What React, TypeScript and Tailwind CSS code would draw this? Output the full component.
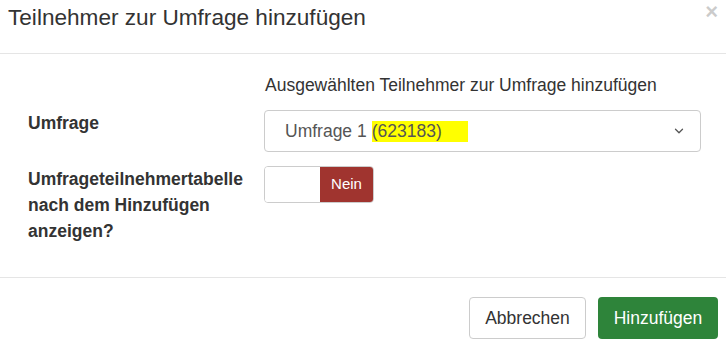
import { ChevronDown } from 'lucide-react';

function Header() {
  return (
    <div className="flex items-start justify-between h-[54px] border-b border-[#e5e5e5] pl-[8px] pr-[8px]">
      <h4 className="text-[22.6px] leading-[30px] mt-[3px] text-[#333]">Teilnehmer zur Umfrage hinzufügen</h4>
      <button className="text-[22px] leading-[21px] font-bold text-black opacity-20 mt-[1px]">×</button>
    </div>
  );
}

function SurveySelect() {
  return (
    <div className="flex items-center justify-between h-[42px] border border-[#ccc] rounded-[4px] pl-[20px] pr-[14px] text-[17.5px] text-[#555]">
      <div className="flex items-center">
        <span>Umfrage 1</span>
        <span className="ml-[5px] bg-[#ffff00] pr-[26px] leading-[21px]">(623183)</span>
      </div>
      <ChevronDown className="w-[14px] h-[14px] text-[#555]" strokeWidth={2.2} />
    </div>
  );
}

function Toggle() {
  return (
    <div className="flex w-[110px] h-[37px] border border-[#ccc] rounded-[4px] overflow-hidden">
      <div className="w-[55px] bg-white" />
      <div className="flex-1 bg-[#a0342f] text-white text-[15px] flex items-center justify-center">Nein</div>
    </div>
  );
}

export default function App() {
  return (
    <div className="w-[726px] h-[350px] bg-white overflow-hidden" style={{ fontFamily: '"Liberation Sans", Arial, sans-serif' }}>
      <Header />
      <div className="h-[223px] pl-[28px] pr-[25px] pt-[18px]">
        <div className="grid grid-cols-[236px_1fr] gap-y-[14px] text-[17.5px] text-[#333]">
          <div />
          <div className="leading-[26px] -mb-[2px] pl-[1px]">Ausgewählten Teilnehmer zur Umfrage hinzufügen</div>
          <label className="font-bold leading-[26px]">Umfrage</label>
          <SurveySelect />
          <label className="font-bold leading-[26px]">
            Umfrageteilnehmertabelle
            <br />
            nach dem Hinzufügen
            <br />
            anzeigen?
          </label>
          <div>
            <Toggle />
          </div>
        </div>
      </div>
      <div className="border-t border-[#e5e5e5] flex justify-end gap-[12px] pt-[19px] pr-[8px]">
        <button className="h-[42px] w-[117px] border border-[#ccc] rounded-[4px] bg-white text-[17.5px] text-[#333]">Abbrechen</button>
        <button className="h-[42px] w-[120px] rounded-[4px] bg-[#2e843a] text-[17.5px] text-white">Hinzufügen</button>
      </div>
    </div>
  );
}
